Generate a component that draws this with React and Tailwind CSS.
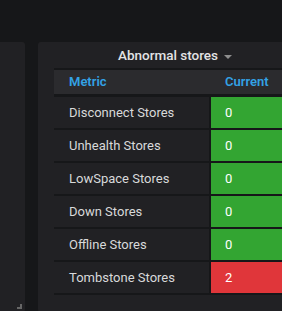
import React from 'react';

const rows = [
  { name: 'Disconnect Stores', value: 0 },
  { name: 'Unhealth Stores', value: 0 },
  { name: 'LowSpace Stores', value: 0 },
  { name: 'Down Stores', value: 0 },
  { name: 'Offline Stores', value: 0 },
  { name: 'Tombstone Stores', value: 2 },
];

function App() {
  return (
    <div
      className="w-[282px] h-[311px] overflow-hidden bg-[#161719] pt-[42px] text-[#d8d9da]"
      style={{ fontFamily: 'Roboto, "Liberation Sans", sans-serif' }}
    >
      <div className="flex gap-[13px] h-full">
        {/* left panel, mostly off screen */}
        <div className="relative w-[25px] shrink-0 h-[270px] bg-[#212124] rounded-r-[3px]">
          <div className="absolute right-[3px] bottom-[3px] w-[5px] h-[5px] border-r-2 border-b-2 border-[#666]" />
        </div>

        <div className="w-[274px] shrink-0 h-[270px] bg-[#212124] rounded-[3px] px-4">
          <div className="h-[26px] flex items-center justify-center gap-[6px] pt-[1px]">
            <span className="text-[13.5px] font-medium text-[#e3e3e4]">Abnormal stores</span>
            <span className="w-0 h-0 border-l-[4px] border-r-[4px] border-t-[4px] border-l-transparent border-r-transparent border-t-[#8e8e8e] mt-[2px]" />
          </div>

          <div className="border-t-2 border-[#161719]">
            <div className="flex h-[24px] bg-[#2b2b2e] items-center text-[13px] font-semibold text-[#33a2e5] border-b-[3px] border-[#161719] box-content">
              <div className="w-[157px] pl-[15px]">Metric</div>
              <div className="pl-[14px]">Current</div>
            </div>
            {rows.map((r) => (
              <div key={r.name} className="flex h-[31px] border-b-2 border-[#161719] box-content text-[13px]">
                <div className="w-[155px] pl-[15px] flex items-center text-[#d8d9da]">{r.name}</div>
                <div className="w-[2px] bg-[#161719]" />
                <div
                  className={
                    r.value > 0
                      ? 'flex-1 flex items-center pl-[14px] bg-[#e0363a] text-white'
                      : 'flex-1 flex items-center pl-[14px] bg-[#33a532] text-white'
                  }
                >
                  {r.value}
                </div>
              </div>
            ))}
          </div>
        </div>
      </div>
    </div>
  );
}

export default App;
